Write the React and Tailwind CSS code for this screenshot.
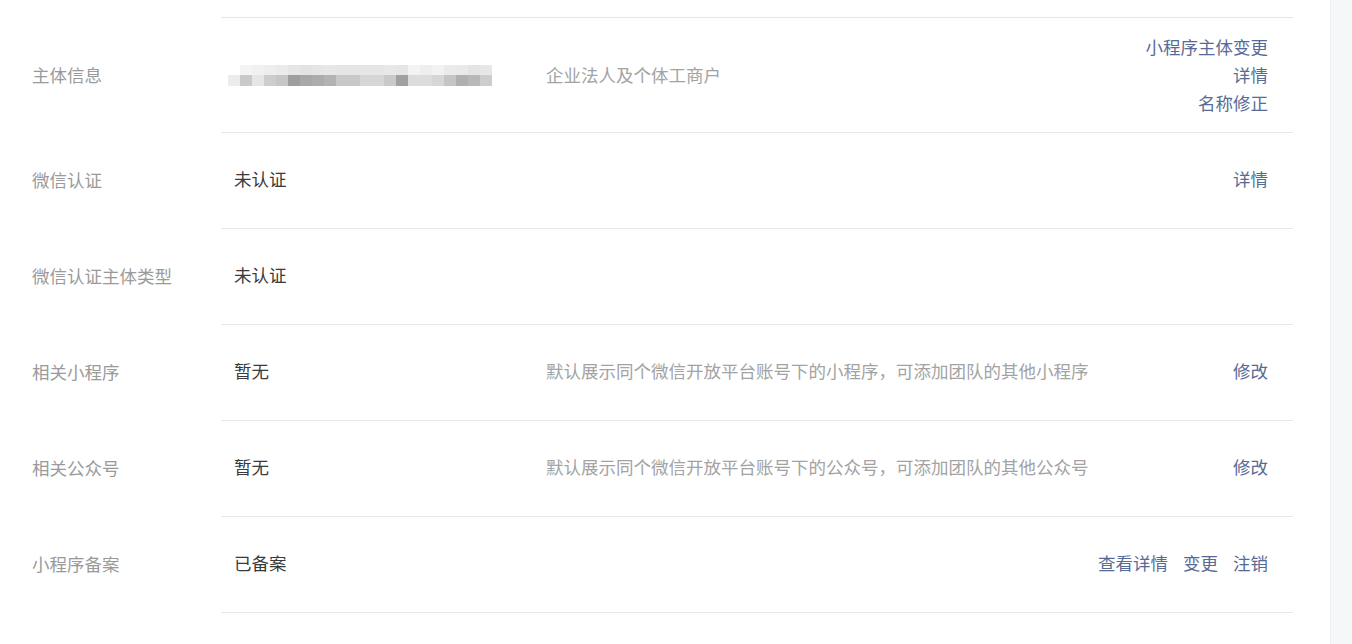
import React from "react";

const mosaicTop = [
  "#ffffff", "#f4f4f4", "#f1f1f1", "#eeeeee", "#ebebeb", "#e6e6e6", "#e3e3e3", "#e6e6e6",
  "#e7e7e7", "#e5e5e5", "#e5e5e5", "#e6e6e6", "#e6e6e6", "#e8e8e8", "#e6e6e6", "#f3f3f3",
  "#eeeeee", "#f2f2f2", "#ebebeb", "#e9e9e9", "#e4e4e4", "#e7e7e7",
];

const mosaicBottom = [
  "#ececec", "#c9c9c9", "#e6e6e6", "#cdcdcd", "#c6c6c6", "#9e9e9e", "#a8a8a8", "#acacac",
  "#b3b3b3", "#c8c8c8", "#c8c8c8", "#d6d6d6", "#d6d6d6", "#c9c9c9", "#a1a1a1", "#dcdcdc",
  "#dcdcdc", "#d6d6d6", "#c5c5c5", "#b0b0b0", "#b8b8b8", "#cdcdcd",
];

// blurred company name
const Mosaic = () => (
  <div className="flex flex-col">
    <div className="flex h-[10px]">
      {mosaicTop.map((c, i) => (
        <div key={i} className="w-[12px] h-full" style={{ backgroundColor: c }} />
      ))}
    </div>
    <div className="flex h-[11px]">
      {mosaicBottom.map((c, i) => (
        <div key={i} className="w-[12px] h-full" style={{ backgroundColor: c }} />
      ))}
    </div>
  </div>
);

const rows = [
  {
    label: "主体信息",
    value: <Mosaic />,
    desc: "企业法人及个体工商户",
    actions: ["小程序主体变更", "详情", "名称修正"],
    stacked: true,
  },
  { label: "微信认证", value: "未认证", actions: ["详情"] },
  { label: "微信认证主体类型", value: "未认证" },
  {
    label: "相关小程序",
    value: "暂无",
    desc: "默认展示同个微信开放平台账号下的小程序，可添加团队的其他小程序",
    actions: ["修改"],
  },
  {
    label: "相关公众号",
    value: "暂无",
    desc: "默认展示同个微信开放平台账号下的公众号，可添加团队的其他公众号",
    actions: ["修改"],
  },
  { label: "小程序备案", value: "已备案", actions: ["查看详情", "变更", "注销"] },
];

const App = () => {
  return (
    <div
      className="flex w-full h-[644px] bg-white text-[17.5px] leading-[28px] overflow-hidden"
      style={{ fontFamily: '"Noto Sans CJK SC", "Noto Sans", sans-serif' }}
    >
      <div className="flex-1 pl-8 pr-[37px] pt-[17px]">
        {rows.map((row, i) => (
          <div key={i} className="flex">
            <div
              className={`w-[189px] flex items-center text-[#9a9a9a] ${
                i === 0 ? "pb-0" : "pb-[3px]"
              }`}
            >
              {row.label}
            </div>
            <div
              className={`flex-1 flex items-center border-b border-[#e7e7eb] pr-[25px] ${
                i === 0 ? "h-[116px] border-t pb-0" : "h-[96px] pb-[3px]"
              }`}
            >
              <div className="w-[325px] pl-[7px] text-[#3a3a3a]">
                {typeof row.value === "string" ? (
                  <span className="pl-[6px]">{row.value}</span>
                ) : (
                  row.value
                )}
              </div>
              <div className="flex-1 text-[#a3a3a3]">{row.desc}</div>
              {row.actions && (
                <div
                  className={`flex text-[#576b95] ${
                    row.stacked ? "flex-col items-end" : "gap-[15px]"
                  }`}
                >
                  {row.actions.map((a) => (
                    <a key={a} className="cursor-pointer">
                      {a}
                    </a>
                  ))}
                </div>
              )}
            </div>
          </div>
        ))}
      </div>
      <div className="w-[22px] bg-[#f6f7f9] border-l border-[#eef0f3]" />
    </div>
  );
};

export default App;
